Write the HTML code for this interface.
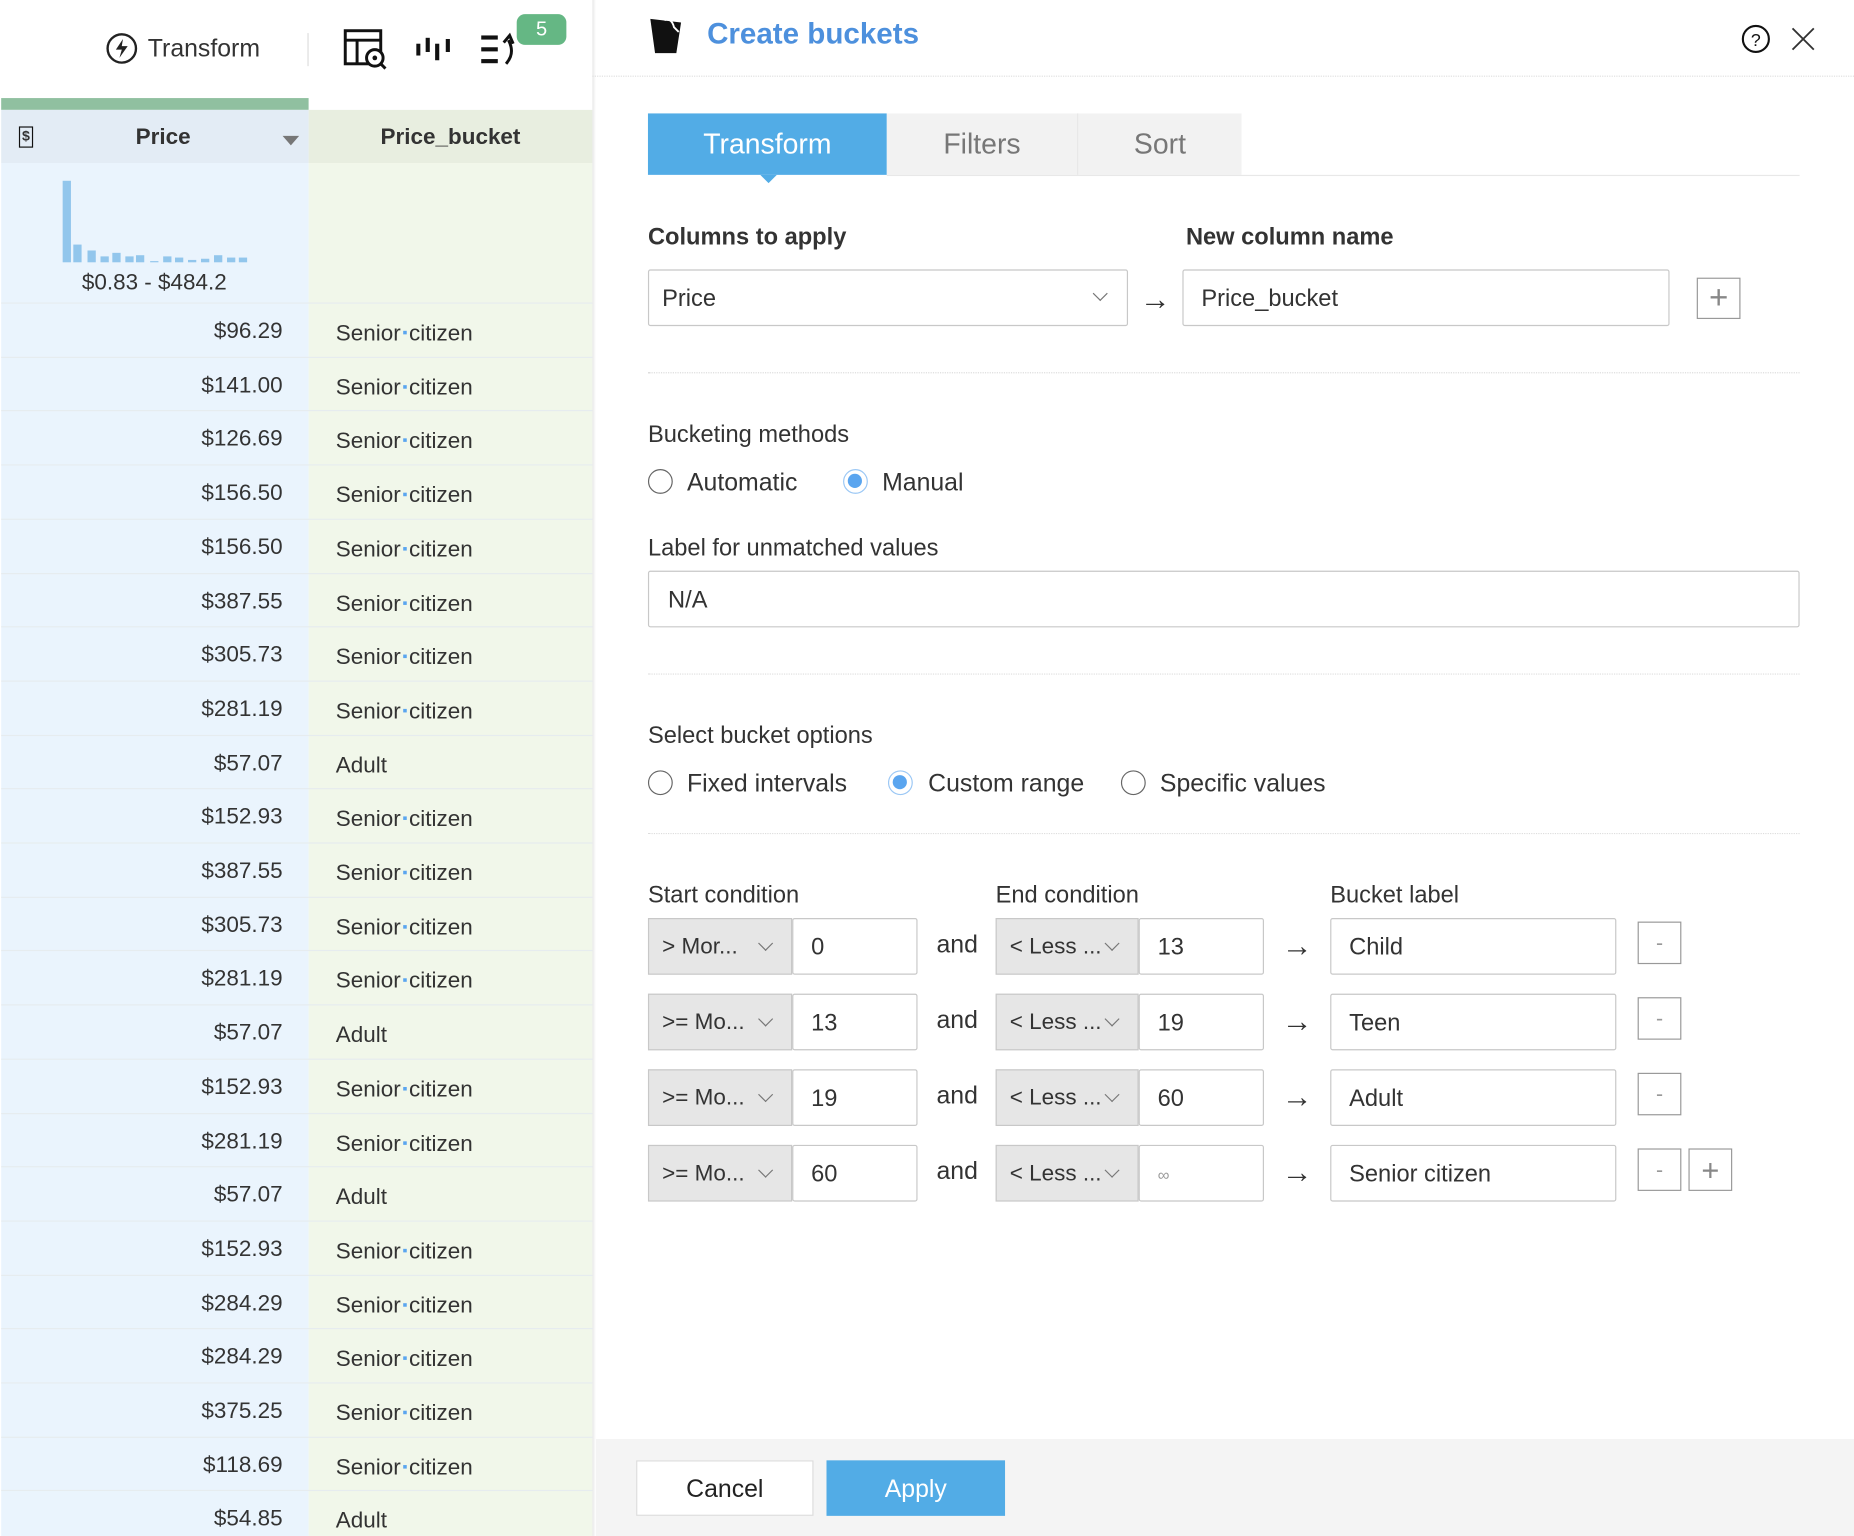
<!DOCTYPE html>
<html><head><meta charset="utf-8"><style>
*{margin:0;padding:0;box-sizing:border-box}
html,body{width:1854px;height:1536px;overflow:hidden;background:#fff}
#w{position:absolute;left:0;top:0;width:1568px;height:1300px;transform:scale(1.1824,1.1815);transform-origin:0 0;font-family:"Liberation Sans",sans-serif;color:#333}
.a{position:absolute}
.t{position:absolute;white-space:nowrap;transform:translateY(2px)}
.box{position:absolute;border:1px solid #c8c8c8;background:#fff;border-radius:2px}
.sel{position:absolute;background:#e6e6e6;border:1px solid #c8c8c8;font-size:19px;line-height:48px;padding-left:11px}
.chev{position:absolute;width:9px;height:9px;border-right:1.6px solid #777;border-bottom:1.6px solid #777;transform:rotate(45deg)}
.sep{position:absolute;left:548px;width:974px;border-top:1px dotted #ddd}
.radio{position:absolute;width:21px;height:21px;border-radius:50%;border:1.5px solid #666;background:#fff}
.radio.on{border:1.5px solid #9cc8f5}
.radio.on:after{content:"";position:absolute;left:3px;top:3px;width:12px;height:12px;border-radius:50%;background:#5aa5ef}
.pc{position:absolute;left:0;width:261px;text-align:right;padding-right:22px;font-size:19px;transform:translateY(2px)}
.bc{position:absolute;left:284px;font-size:19px;transform:translateY(2px)}
.dot{display:inline-block;width:3px;height:3px;background:#5aa5ef;vertical-align:5px;margin:0 2px}
.btn{position:absolute;width:37px;height:36px;border:1px solid #999;background:#fff;color:#999;text-align:center}
.arr{font-size:26px}
</style></head><body><div id="w">

<!-- LEFT PANEL -->
<div class="a" style="left:0;top:0;width:501px;height:1300px;background:#fff"></div>
<svg class="a" style="left:89px;top:27px" width="28" height="28" viewBox="0 0 28 28"><circle cx="14" cy="14" r="12" fill="none" stroke="#222" stroke-width="2"/><path d="M15 6 L9 15 H14 L12 22 L19 12 H14 Z" fill="#222"/></svg>
<div class="t" style="left:125px;top:28px;font-size:21px;color:#333">Transform</div>
<div class="a" style="left:260px;top:28px;height:28px;border-left:1px solid #ddd"></div>
<svg class="a" style="left:290px;top:24px" width="40" height="36" viewBox="0 0 40 36"><rect x="2" y="2" width="30" height="28" fill="none" stroke="#111" stroke-width="2.5"/><line x1="2" y1="10" x2="32" y2="10" stroke="#111" stroke-width="2.5"/><line x1="12" y1="10" x2="12" y2="30" stroke="#111" stroke-width="2.5"/><circle cx="27" cy="25" r="7" fill="#fff" stroke="#111" stroke-width="2.5"/><circle cx="27" cy="25" r="2" fill="#111"/><line x1="32" y1="30" x2="36" y2="34" stroke="#111" stroke-width="2.5"/></svg>
<svg class="a" style="left:352px;top:30px" width="32" height="24" viewBox="0 0 32 24"><rect x="0" y="7" width="3.5" height="10" fill="#111"/><rect x="8" y="2" width="3.5" height="12" fill="#111"/><rect x="16" y="7" width="3.5" height="14" fill="#111"/><rect x="25" y="3" width="3.5" height="11" fill="#111"/></svg>
<svg class="a" style="left:406px;top:27px" width="32" height="30" viewBox="0 0 32 30"><rect x="1" y="3" width="14" height="3.5" fill="#111"/><rect x="1" y="13" width="14" height="3.5" fill="#111"/><rect x="1" y="23" width="14" height="3.5" fill="#111"/><path d="M22 27 Q30 18 24 7" fill="none" stroke="#111" stroke-width="2.5"/><path d="M20 9 L25 3 L28 10" fill="none" stroke="#111" stroke-width="2.5"/></svg>
<div class="a" style="left:437px;top:12px;width:42px;height:26px;background:#65b784;border-radius:7px;color:#fff;font-size:17px;text-align:center;line-height:26px">5</div>

<div class="a" style="left:1px;top:83px;width:260px;height:10px;background:#90c0a0"></div>
<div class="a" style="left:1px;top:93px;width:260px;height:45px;background:#e3ecf5"></div>
<div class="a" style="left:261px;top:93px;width:240px;height:45px;background:#e8eee0"></div>
<div class="a" style="left:16px;top:107px;width:12px;height:18px;border:1.5px solid #111;font-size:12px;line-height:15px;text-align:center;font-weight:bold">$</div>
<div class="t" style="left:0;width:276px;text-align:center;top:104px;font-size:19px;font-weight:bold">Price</div>
<div class="a" style="left:239px;top:115px;border-left:7px solid transparent;border-right:7px solid transparent;border-top:8px solid #777"></div>
<div class="t" style="left:261px;width:240px;text-align:center;top:104px;font-size:19px;font-weight:bold">Price_bucket</div>
<div class="a" style="left:1px;top:138px;width:260px;height:1162px;background:#eaf4fd"></div>
<div class="a" style="left:261px;top:138px;width:240px;height:1162px;background:#f1f7ea"></div>
<svg class="a" style="left:50px;top:150px" width="165" height="74" viewBox="0 0 165 74"><g fill="#92c6ec"><rect x="3" y="3" width="7" height="69"/><rect x="12" y="57" width="7" height="15"/><rect x="24" y="62" width="7" height="10"/><rect x="35" y="67" width="7" height="5"/><rect x="45" y="64" width="7" height="8"/><rect x="56" y="67" width="7" height="5"/><rect x="65" y="66" width="7" height="6"/><rect x="77" y="71" width="7" height="1"/><rect x="88" y="67" width="7" height="5"/><rect x="98" y="68" width="7" height="4"/><rect x="109" y="70" width="7" height="2"/><rect x="120" y="69" width="7" height="3"/><rect x="131" y="66" width="7" height="6"/><rect x="142" y="68" width="7" height="4"/><rect x="152" y="68" width="7" height="4"/></g></svg>
<div class="t" style="left:0;width:261px;text-align:center;top:227px;font-size:19px">$0.83 - $484.2</div>
<div id="rows"></div>
<div class="a" style="left:501px;top:0;width:3px;height:1300px;background:linear-gradient(90deg,#e8e8e8,#fff)"></div>

<!-- RIGHT PANEL -->
<svg class="a" style="left:548px;top:13px" width="32" height="34" viewBox="0 0 32 34"><path d="M2 3 L28 6 L24 32 L6 32 Z" fill="#111"/><path d="M14 4 Q20 2 22 10 L26 14" fill="none" stroke="#fff" stroke-width="1.6"/></svg>
<div class="t" style="left:598px;top:13px;font-size:25px;font-weight:bold;color:#4d90dd">Create buckets</div>
<svg class="a" style="left:1472px;top:20px" width="26" height="26" viewBox="0 0 26 26"><circle cx="13" cy="13" r="11" fill="none" stroke="#111" stroke-width="1.8"/><text x="13" y="19" text-anchor="middle" font-size="15" font-family="Liberation Sans" fill="#111">?</text></svg>
<svg class="a" style="left:1514px;top:22px" width="22" height="22" viewBox="0 0 22 22"><path d="M2 2 L20 20 M20 2 L2 20" stroke="#333" stroke-width="1.6"/></svg>
<div class="a" style="left:501px;top:64px;width:1067px;border-top:1px dotted #ddd"></div>

<div class="a" style="left:548px;top:96px;width:202px;height:52px;background:#52ace6;color:#fff;font-size:24px;text-align:center;line-height:54px">Transform</div>
<div class="a" style="left:643px;top:148px;border-left:7px solid transparent;border-right:7px solid transparent;border-top:7px solid #52ace6"></div>
<div class="a" style="left:750px;top:96px;width:162px;height:52px;background:#f2f2f2;color:#777;font-size:24px;text-align:center;line-height:54px;border-right:1px solid #e6e6e6">Filters</div>
<div class="a" style="left:912px;top:96px;width:138px;height:52px;background:#f2f2f2;color:#777;font-size:24px;text-align:center;line-height:54px">Sort</div>
<div class="a" style="left:750px;top:148px;width:772px;border-top:1px solid #e8e8e8"></div>

<div class="t" style="left:548px;top:188px;font-size:20px;font-weight:bold">Columns to apply</div>
<div class="t" style="left:1003px;top:188px;font-size:20px;font-weight:bold">New column name</div>
<div class="box" style="left:548px;top:228px;width:406px;height:48px"></div>
<div class="t" style="left:560px;top:240px;font-size:20px">Price</div>
<div class="chev" style="left:926px;top:244px"></div>
<div class="t arr" style="left:964px;top:236px">&#8594;</div>
<div class="box" style="left:1000px;top:228px;width:412px;height:48px"></div>
<div class="t" style="left:1016px;top:240px;font-size:20px">Price_bucket</div>
<div class="btn" style="left:1435px;top:235px;height:35px;font-size:28px;line-height:32px;color:#888">+</div>

<div class="sep" style="top:315px"></div>
<div class="t" style="left:548px;top:355px;font-size:20px">Bucketing methods</div>
<div class="radio" style="left:548px;top:397px"></div>
<div class="t" style="left:581px;top:395px;font-size:21px">Automatic</div>
<div class="radio on" style="left:713px;top:397px"></div>
<div class="t" style="left:746px;top:395px;font-size:21px">Manual</div>
<div class="t" style="left:548px;top:451px;font-size:20px">Label for unmatched values</div>
<div class="box" style="left:548px;top:483px;width:974px;height:48px"></div>
<div class="t" style="left:565px;top:495px;font-size:20px">N/A</div>
<div class="sep" style="top:570px"></div>
<div class="t" style="left:548px;top:610px;font-size:20px">Select bucket options</div>
<div class="radio" style="left:548px;top:652px"></div>
<div class="t" style="left:581px;top:650px;font-size:21px">Fixed intervals</div>
<div class="radio on" style="left:751px;top:652px"></div>
<div class="t" style="left:785px;top:650px;font-size:21px">Custom range</div>
<div class="radio" style="left:948px;top:652px"></div>
<div class="t" style="left:981px;top:650px;font-size:21px">Specific values</div>
<div class="sep" style="top:705px"></div>

<div class="t" style="left:548px;top:745px;font-size:20px">Start condition</div>
<div class="t" style="left:842px;top:745px;font-size:20px">End condition</div>
<div class="t" style="left:1125px;top:745px;font-size:20px">Bucket label</div>
<div id="cond"></div>

<div class="a" style="left:504px;top:1218px;width:1064px;height:82px;background:#f4f4f4"></div>
<div class="a" style="left:538px;top:1236px;width:150px;height:47px;background:#fff;border:1px solid #ddd;font-size:21px;text-align:center;line-height:47px;color:#222">Cancel</div>
<div class="a" style="left:699px;top:1236px;width:151px;height:47px;background:#52ace6;font-size:21px;text-align:center;line-height:49px;color:#fff">Apply</div>

<script>
var v=[["$96.29",1],["$141.00",1],["$126.69",1],["$156.50",1],["$156.50",1],["$387.55",1],["$305.73",1],["$281.19",1],["$57.07",0],["$152.93",1],["$387.55",1],["$305.73",1],["$281.19",1],["$57.07",0],["$152.93",1],["$281.19",1],["$57.07",0],["$152.93",1],["$284.29",1],["$284.29",1],["$375.25",1],["$118.69",1],["$54.85",0]];
var h="",y0=257,rh=45.7;
v.forEach(function(r,i){var y=y0+i*rh;
h+='<div class="a" style="left:1px;top:'+(y-1)+'px;width:500px;border-top:1px solid #e6ecef"></div>';
h+='<div class="pc" style="top:'+(y+11)+'px">'+r[0]+'</div>';
h+='<div class="bc" style="top:'+(y+13)+'px">'+(r[1]?'Senior<span class="dot"></span>citizen':'Adult')+'</div>';});
document.getElementById("rows").outerHTML=h;
var c=[["&gt; Mor...","0","13","Child",0],["&gt;= Mo...","13","19","Teen",0],["&gt;= Mo...","19","60","Adult",0],["&gt;= Mo...","60","&#8734;","Senior citizen",1]];
var g="";
c.forEach(function(r,i){var y=777+i*64;
g+='<div class="sel" style="left:548px;top:'+y+'px;width:122px;height:48px">'+r[0]+'</div><div class="chev" style="left:643px;top:'+(y+17)+'px"></div>';
g+='<div class="box" style="left:670px;top:'+y+'px;width:106px;height:48px"></div><div class="t" style="left:686px;top:'+(y+12)+'px;font-size:20px">'+r[1]+'</div>';
g+='<div class="t" style="left:792px;top:'+(y+9)+'px;font-size:21px">and</div>';
g+='<div class="sel" style="left:842px;top:'+y+'px;width:121px;height:48px">&lt; Less ...</div><div class="chev" style="left:936px;top:'+(y+17)+'px"></div>';
g+='<div class="box" style="left:963px;top:'+y+'px;width:106px;height:48px"></div><div class="t" style="left:979px;top:'+(y+(i==3?15:12))+'px;font-size:'+(i==3?14:20)+'px;color:'+(i==3?'#999':'#333')+'">'+r[2]+'</div>';
g+='<div class="t arr" style="left:1084px;top:'+(y+6)+'px">&#8594;</div>';
g+='<div class="box" style="left:1125px;top:'+y+'px;width:242px;height:48px"></div><div class="t" style="left:1141px;top:'+(y+12)+'px;font-size:20px">'+r[3]+'</div>';
g+='<div class="btn" style="left:1385px;top:'+(y+3)+'px;font-size:18px;line-height:34px">-</div>';
if(r[4])g+='<div class="btn" style="left:1428px;top:'+(y+3)+'px;font-size:26px;line-height:34px;color:#888">+</div>';});
document.getElementById("cond").outerHTML=g;
</script>
</div></body></html>
